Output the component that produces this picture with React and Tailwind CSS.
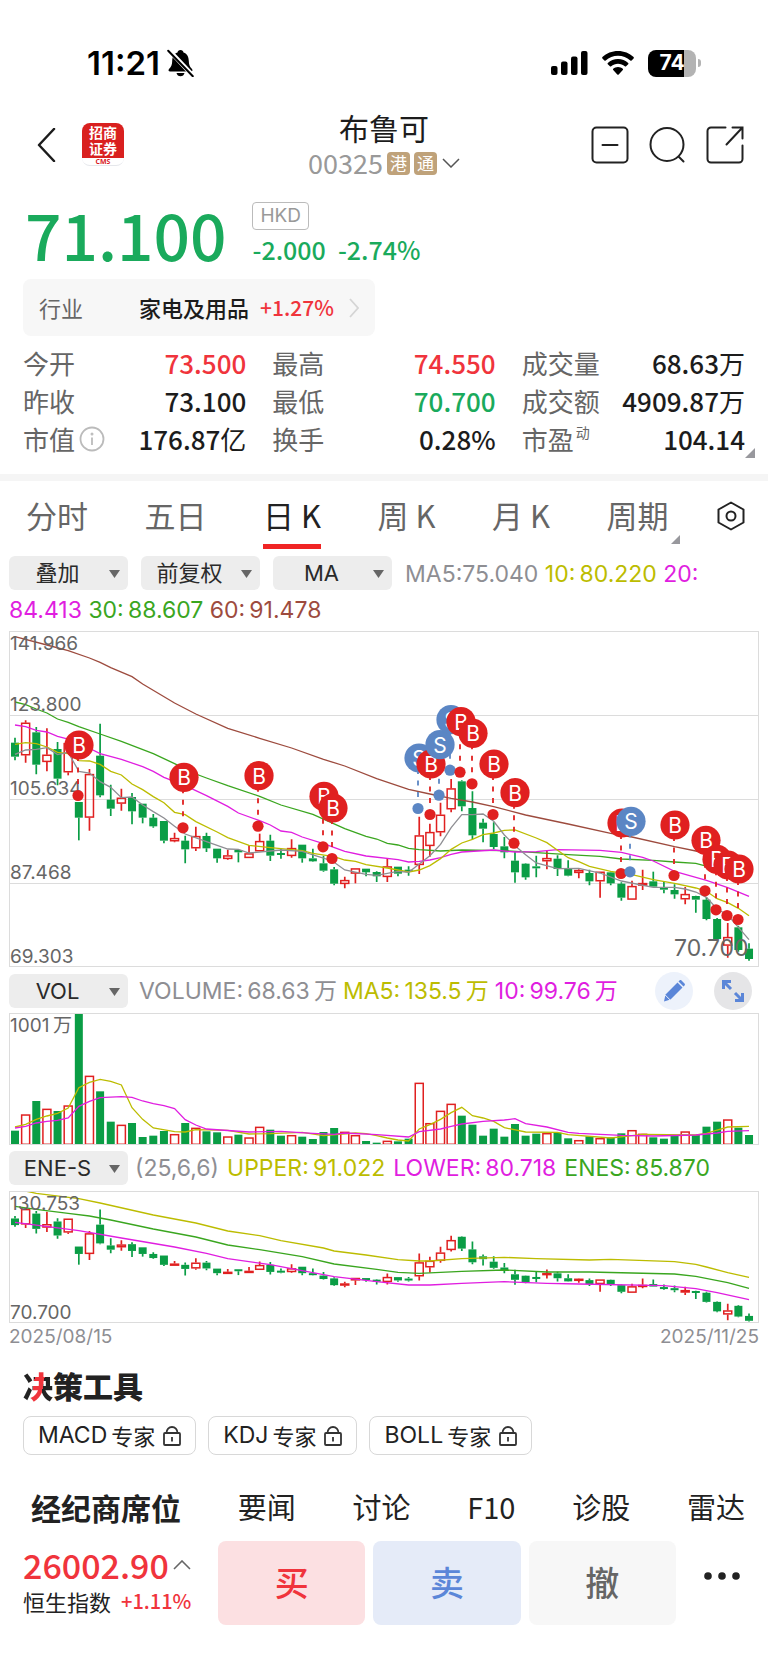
import { useState } from "react";

const RED = "#e02020";
const GREEN = "#0a9d45";
const BLUE = "#5b86c4";

// high, body top, body bottom, low, 1 = up day. Levels are thirds of a pixel.
const candles = [
  [336, 351, 393, 404, 0], [284, 291, 389, 411, 1], [304, 320, 417, 446, 0], [308, 387, 409, 437, 1],
  [349, 370, 459, 479, 0], [352, 352, 440, 449, 1], [529, 529, 576, 644, 0], [430, 445, 576, 615, 1],
  [294, 390, 509, 515, 0], [477, 522, 549, 571, 0], [489, 516, 534, 555, 1], [502, 514, 557, 596, 0],
  [534, 534, 576, 593, 0], [565, 576, 602, 606, 0], [586, 586, 645, 653, 0], [621, 637, 647, 650, 1],
  [630, 645, 671, 713, 0], [603, 631, 668, 676, 1], [621, 631, 668, 679, 0], [669, 669, 698, 711, 0],
  [672, 689, 700, 702, 1], [673, 673, 680, 710, 0], [659, 683, 697, 697, 1], [624, 646, 677, 677, 1],
  [627, 645, 690, 706, 0], [669, 682, 688, 699, 0], [641, 667, 691, 696, 1], [657, 657, 698, 711, 0],
  [669, 698, 707, 708, 0], [690, 713, 735, 738, 0], [724, 731, 774, 779, 0], [753, 763, 775, 788, 1],
  [728, 728, 744, 773, 1], [729, 729, 740, 752, 0], [737, 739, 752, 769, 0], [700, 722, 754, 769, 1],
  [723, 723, 744, 752, 0], [722, 732, 738, 750, 0], [573, 629, 718, 745, 1], [594, 619, 661, 693, 1],
  [531, 567, 620, 632, 1], [460, 488, 551, 560, 1], [464, 467, 542, 557, 0], [497, 547, 629, 641, 0],
  [579, 591, 609, 650, 0], [590, 625, 664, 670, 0], [634, 662, 680, 698, 0], [676, 705, 740, 771, 0],
  [713, 714, 755, 762, 0], [690, 722, 728, 755, 0], [675, 697, 707, 731, 1], [689, 699, 730, 751, 0],
  [704, 730, 750, 752, 0], [731, 733, 742, 758, 1], [732, 742, 767, 779, 0], [738, 738, 767, 816, 1],
  [738, 740, 773, 779, 0], [770, 774, 816, 825, 0], [765, 781, 822, 822, 1], [732, 772, 780, 793, 1],
  [738, 767, 783, 783, 0], [769, 786, 790, 803, 0], [776, 793, 806, 819, 0], [784, 805, 821, 836, 1],
  [810, 811, 822, 861, 0], [815, 822, 880, 884, 0], [877, 880, 940, 945, 0], [892, 934, 960, 996, 1],
  [900, 905, 973, 978, 0], [953, 969, 1000, 1005, 0],
];

const volumes = [
  495, 446, 406, 429, 436, 419, 142, 330, 377, 468, 477, 472, 514, 510, 496, 505, 472, 486, 497, 500, 512, 507, 515,
  483, 492, 510, 508, 513, 520, 499, 487, 498, 508, 526, 531, 525, 527, 519, 351, 472, 435, 414, 450, 477, 510, 489,
  513, 475, 510, 504, 502, 501, 518, 523, 512, 517, 515, 503, 493, 504, 515, 519, 511, 497, 508, 483, 468, 461, 486,
  508,
];

// [day, level] pairs
const priceLines = [
  {
    color: "#9d4b3e",
    points: [[0, 33], [3, 58], [5, 75], [7, 97], [8, 110], [9, 126], [11, 153], [12, 175], [15, 232], [17, 265], [20, 308], [23, 338], [26, 367], [29, 401], [31, 421], [34, 459], [37, 491], [39, 505], [41, 518], [43, 529], [45, 543], [48, 568], [52, 595], [56, 623], [58, 634], [62, 663], [64, 676], [69, 716]],
  },
  {
    color: "#3aa61f",
    points: [[0, 229], [1, 237], [2, 250], [3, 262], [4, 280], [5, 290], [6, 303], [8, 325], [10, 347], [13, 384], [15, 414], [17, 445], [18, 457], [20, 480], [23, 512], [25, 538], [28, 566], [31, 609], [33, 632], [34, 640], [35, 653], [36, 658], [37, 668], [38, 672], [40, 676], [42, 673], [46, 675], [49, 681], [52, 687], [55, 692], [57, 700], [60, 704], [62, 709], [64, 713], [69, 756]],
  },
  {
    color: "#e01ee0",
    points: [[0, 298], [1, 303], [2, 314], [3, 319], [4, 332], [5, 340], [6, 352], [8, 384], [10, 401], [12, 423], [13, 437], [14, 455], [16, 480], [18, 510], [20, 542], [21, 562], [23, 585], [24, 598], [25, 616], [26, 620], [27, 634], [29, 654], [31, 677], [33, 691], [36, 702], [37, 709], [38, 707], [39, 703], [40, 696], [41, 686], [42, 679], [45, 673], [47, 679], [49, 678], [51, 672], [55, 674], [57, 680], [59, 695], [60, 706], [62, 737], [65, 764], [67, 786], [69, 812]],
  },
  {
    color: "#bcbc00",
    points: [[0, 356], [1, 351], [2, 354], [3, 364], [4, 380], [5, 384], [6, 405], [7, 406], [8, 416], [9, 437], [10, 448], [11, 475], [12, 492], [13, 513], [14, 531], [15, 560], [16, 567], [17, 588], [19, 619], [20, 636], [22, 659], [24, 666], [27, 675], [28, 683], [30, 693], [31, 703], [32, 707], [33, 717], [35, 727], [37, 739], [38, 733], [39, 720], [40, 699], [41, 671], [42, 652], [43, 641], [44, 627], [45, 622], [46, 614], [47, 613], [49, 637], [50, 651], [51, 674], [52, 696], [53, 708], [54, 722], [56, 737], [58, 747], [60, 762], [62, 773], [64, 787], [65, 797], [66, 819], [67, 831], [68, 848], [69, 870]],
  },
  {
    color: "#8e8e93",
    points: [[0, 386], [1, 373], [2, 371], [3, 366], [4, 387], [5, 380], [6, 437], [7, 442], [8, 468], [9, 485], [10, 516], [11, 514], [12, 538], [13, 558], [14, 577], [15, 602], [16, 625], [18, 648], [20, 670], [21, 671], [22, 682], [24, 676], [25, 673], [27, 677], [28, 688], [29, 697], [30, 710], [31, 733], [33, 746], [34, 749], [36, 737], [37, 740], [38, 715], [39, 690], [40, 656], [41, 606], [42, 567], [43, 567], [44, 565], [45, 587], [46, 628], [47, 660], [48, 687], [49, 712], [51, 729], [53, 728], [55, 742], [57, 766], [60, 785], [62, 785], [63, 790], [64, 799], [65, 815], [66, 850], [67, 868], [68, 905], [69, 942]],
  },
];

const volumeLines = [
  {
    color: "#bcbc00",
    points: [[0, 484], [1, 476], [2, 461], [3, 451], [4, 443], [5, 427], [6, 366], [7, 350], [8, 341], [9, 347], [10, 358], [11, 426], [12, 461], [13, 487], [15, 498], [16, 499], [17, 492], [20, 494], [22, 505], [24, 504], [27, 500], [29, 510], [32, 502], [33, 504], [34, 510], [35, 517], [36, 523], [37, 526], [38, 490], [39, 477], [40, 461], [41, 441], [42, 425], [43, 450], [44, 457], [45, 467], [46, 486], [48, 499], [51, 500], [52, 507], [56, 517], [58, 510], [59, 506], [64, 508], [65, 503], [66, 493], [67, 484], [69, 482]],
  },
  {
    color: "#e01ee0",
    points: [[0, 487], [1, 482], [2, 472], [3, 467], [4, 464], [5, 457], [6, 422], [7, 407], [8, 396], [10, 393], [11, 395], [12, 406], [13, 414], [14, 420], [15, 429], [16, 462], [17, 478], [18, 490], [22, 499], [25, 497], [28, 503], [30, 506], [31, 502], [34, 507], [37, 514], [38, 498], [40, 490], [41, 482], [42, 475], [44, 467], [46, 463], [47, 459], [48, 474], [50, 484], [52, 500], [53, 503], [57, 509], [60, 511], [64, 508], [66, 502], [67, 497], [69, 495]],
  },
];

const eneLines = [
  {
    color: "#bcbc00",
    points: [[0, 136], [1, 136], [2, 143], [6, 159], [8, 172], [13, 208], [17, 232], [20, 256], [23, 270], [25, 285], [29, 307], [30, 316], [33, 328], [36, 342], [38, 346], [39, 346], [42, 339], [46, 335], [49, 339], [54, 343], [56, 341], [62, 348], [64, 356], [65, 364], [67, 381], [69, 395]],
  },
  {
    color: "#3aa61f",
    points: [[0, 182], [2, 191], [5, 203], [7, 211], [9, 223], [13, 250], [17, 274], [20, 298], [23, 312], [27, 333], [30, 355], [34, 371], [36, 380], [38, 383], [42, 377], [46, 373], [50, 379], [54, 379], [62, 385], [64, 392], [67, 411], [69, 428]],
  },
  {
    color: "#e01ee0",
    points: [[0, 230], [6, 255], [10, 277], [15, 304], [18, 323], [20, 339], [24, 357], [30, 393], [34, 408], [37, 418], [39, 418], [42, 413], [46, 408], [50, 413], [53, 415], [61, 420], [64, 429], [66, 441], [69, 462]],
  },
];

const trades = [
  ["B", 70, 358], ["B", 175, 455], ["B", 250, 450], ["B", 315, 512], ["B", 324, 547], ["S", 410, 397],
  ["B", 422, 415], ["S", 431, 357], ["S", 442, 282], ["B", 452, 288], ["B", 464, 323], ["B", 485, 415],
  ["B", 506, 501], ["B", 613, 592], ["S", 622, 587], ["B", 666, 598], ["B", 697, 644], ["B", 708, 701],
  ["B", 719, 718], ["B", 730, 730],
];

const dayX = (i) => 6 + i * 10.638;
const priceY = (v) => (v - 16) / 3;
const volumeY = (v) => (v - 142) / 3;
const eneY = (v) => (v - 136) / 3;
const priceToEne = (v) => eneY(v * 0.473 + 52.4);

const Lines = ({ lines, y }) =>
  lines.map((line, n) => (
    <polyline
      key={n}
      points={line.points.map(([i, v]) => `${dayX(i)},${y(v)}`).join(" ")}
      fill="none"
      stroke={line.color}
      strokeWidth="1.3"
    />
  ));

const Candles = ({ y }) =>
  candles.map(([high, top, bottom, low, up], i) => {
    const x = dayX(i);
    const color = up ? RED : GREEN;
    const h = Math.max(y(bottom) - y(top), 2);
    return (
      <g key={i} stroke={color}>
        <path d={`M${x} ${y(high)}V${y(top)}M${x} ${y(top) + h}V${y(low)}`} strokeWidth="1.7" />
        {up ? (
          <rect x={x - 4} y={y(top) + 0.6} width="8" height={Math.max(h - 1.2, 1)} fill="none" strokeWidth="1.5" />
        ) : (
          <rect x={x - 4} y={y(top)} width="8" height={h} fill={color} stroke="none" />
        )}
      </g>
    );
  });

const Chart = ({ height, label, children }) => (
  <svg
    viewBox={`0 0 750 ${height}`}
    className="block h-auto w-full font-[Inter,'Noto_Sans_CJK_SC',sans-serif]"
    role="img"
    aria-label={label}
  >
    {children}
    <rect x="0.5" y="0.5" width="749" height={height - 1} fill="none" stroke="#dcdcdc" />
  </svg>
);

const PriceChart = () => (
  <Chart height={336} label="日K">
    {[84, 168, 252].map((y) => (
      <path key={y} d={`M0 ${y + 0.5}H750`} stroke="#dcdcdc" />
    ))}
    <Candles y={priceY} />
    <Lines lines={priceLines} y={priceY} />
    <g fill="#666" fontSize="19">
      <text x="1" y="19">141.966</text>
      <text x="1" y="80">123.800</text>
      <text x="1" y="164">105.634</text>
      <text x="1" y="248">87.468</text>
      <text x="1" y="332">69.303</text>
      <text x="665" y="325" fontSize="23">70.700</text>
    </g>
    {trades.map(([side, x, v], i) => {
      const y = priceY(v);
      const color = side === "B" ? RED : BLUE;
      return (
        <g key={i}>
          <path d={`M${x - 1} ${y + 11}V${y + 45}`} stroke={color} strokeWidth="1.8" strokeDasharray="5 6.5" />
          <circle cx={x - 1} cy={y + 50.5} r="5.6" fill={color} />
        </g>
      );
    })}
    {trades.map(([side, x, v], i) => (
      <g key={i}>
        <circle cx={x} cy={priceY(v)} r="14.6" fill={side === "B" ? RED : BLUE} />
        <text x={x} y={priceY(v) + 8} fontSize="21" fill="#fff" textAnchor="middle">
          {side}
        </text>
      </g>
    ))}
  </Chart>
);

const VolumeChart = () => (
  <Chart height={132} label="VOL">
    {volumes.map((v, i) => {
      const x = dayX(i);
      const y = volumeY(v);
      return candles[i][4] ? (
        <rect key={i} x={x - 4} y={y + 0.7} width="8" height={130.6 - y} fill="none" stroke={RED} strokeWidth="1.5" />
      ) : (
        <rect key={i} x={x - 4} y={y} width="8" height={132 - y} fill={GREEN} />
      );
    })}
    <Lines lines={volumeLines} y={volumeY} />
    <text x="1" y="19" fontSize="19" fill="#666">1001{"\u2009"}万</text>
  </Chart>
);

const EneChart = () => (
  <Chart height={132} label="ENE-S">
    <Candles y={priceToEne} />
    <Lines lines={eneLines} y={eneY} />
    <g fill="#666" fontSize="19">
      <text x="1" y="19">130.753</text>
      <text x="1" y="128">70.700</text>
    </g>
  </Chart>
);

const Picker = ({ label, options }) => (
  <span className="relative mr-[13px] inline-block h-[34px] w-[119px] align-top">
    <select
      aria-label={label}
      className="block h-full w-full appearance-none rounded-md bg-[#ededed] pr-[22px] text-center text-[22px] leading-[34px] text-[#2a2a2a] [text-align-last:center]"
    >
      {options.map((o) => (
        <option key={o}>{o}</option>
      ))}
    </select>
    <svg viewBox="0 0 11 8" className="pointer-events-none absolute top-[14px] right-2 h-2 w-[11px]" fill="#666">
      <path d="M0 0h11L5.500 8z" />
    </svg>
  </span>
);

// name:value pair, with an optional unit set a thin space apart
const Reading = ({ name, value, unit, color }) => (
  <span className={`whitespace-nowrap ${color}`}>
    {name}:{"\u2009"}
    {value}
    {unit && `\u2009${unit}`}
  </span>
);

const Corner = ({ className }) => (
  <svg viewBox="0 0 10 10" className={className} fill="#98989d">
    <path d="M10 0v10H0z" />
  </svg>
);

const StatusBar = () => (
  <div className="flex h-8 items-center justify-between pr-[67px] pl-[87px] font-[Inter,sans-serif]">
    <div className="flex items-center gap-[7px]">
      <span className="text-[33px] leading-8 font-semibold text-black">11:21</span>
      <svg viewBox="0 0 27 28" className="h-7 w-[27px]">
        <path
          d="M13.500 1c-1.800 0-2.800 1-3 2.400C6.600 4.700 5.300 8 5.200 12c-.1 4-.9 5.600-3 7.700-1.200 1.300-.8 2.800 1 2.800h20.600c1.800 0 2.200-1.500 1-2.800-2.100-2.100-2.900-3.700-3-7.700-.1-4-1.400-7.300-5.300-8.600C16.300 2 15.300 1 13.500 1zM9.500 24h8c-.4 2-2 3.300-4 3.300s-3.600-1.300-4-3.300z"
        />
        <path d="M2.200 1.500l23.600 25" stroke="#fff" strokeWidth="4.500" />
        <path d="M1.200 1.800l24.600 25.400" stroke="#000" strokeWidth="2" strokeLinecap="round" />
      </svg>
    </div>
    <div className="flex items-center gap-[14px]">
      <svg viewBox="0 0 37 24" className="h-6 w-[37px]">
        <rect x="0" y="15" width="6.500" height="9" rx="2" />
        <rect x="10" y="10.500" width="6.500" height="13.500" rx="2" />
        <rect x="20" y="5.500" width="6.500" height="18.500" rx="2" />
        <rect x="30" y="0" width="6.500" height="24" rx="2" />
      </svg>
      <svg viewBox="0 0 32 24" className="h-6 w-8">
        <path d="M16 0C9.900 0 4.500 2.300.4 6.100c-.4.400-.4.900 0 1.300l2 2c.4.400.9.400 1.300 0C7 6.500 11.300 4.800 16 4.800s9 1.700 12.300 4.600c.4.400.9.400 1.300 0l2-2c.4-.4.400-.9 0-1.300C27.500 2.300 22.100 0 16 0z" />
        <path d="M16 8c-3.900 0-7.500 1.500-10.200 4-.4.400-.4.900 0 1.300l2.100 2c.4.400.9.400 1.300 0 1.800-1.600 4.200-2.600 6.800-2.600s5 1 6.800 2.600c.4.400.9.400 1.300 0l2.100-2c.4-.4.400-.9 0-1.300C23.500 9.500 19.900 8 16 8z" />
        <path d="M16 16c-1.900 0-3.500.7-4.800 1.800-.4.400-.4.900 0 1.300l4.100 4.300c.4.400 1 .4 1.400 0l4.100-4.300c.4-.4.400-.9 0-1.300C19.500 16.700 17.900 16 16 16z" />
      </svg>
      <div className="flex items-center gap-[2px]">
        <span className="flex h-[27px] w-[48px] items-center justify-center rounded-lg bg-[linear-gradient(90deg,#000_74%,#b3b3b3_74%)] text-[21px] font-bold text-white">
          74
        </span>
        <span className="h-2 w-[3px] rounded-r-full bg-[#b3b3b3]" />
      </div>
    </div>
  </div>
);

const Header = () => (
  <header className="mt-[30px] grid h-[72px] grid-cols-[1fr_auto_1fr] items-center px-6">
    <div className="flex items-center gap-[26px] pl-3">
      <button aria-label="返回">
        <svg viewBox="0 0 20 34" className="h-[34px] w-5" fill="none" stroke="#1c1c1c" strokeWidth="2.500">
          <path d="M18 1L3 17l15 16" strokeLinecap="round" strokeLinejoin="round" />
        </svg>
      </button>
      <div className="mb-[2px] flex h-[43px] w-[42px] flex-col overflow-hidden rounded-lg border-b border-gray-200 bg-white">
        <div className="flex h-[35px] flex-col items-center justify-center bg-[#d9201f] text-[14px] leading-4 font-bold text-white">
          <span>招商</span>
          <span>证券</span>
        </div>
        <span className="text-center font-['Open_Sans',sans-serif] text-[7px] leading-[7px] font-bold text-[#d9201f]">CMS</span>
      </div>
    </div>
    <div className="flex flex-col items-center">
      <h1 className="text-[30px] leading-9">布鲁可</h1>
      <div className="flex h-9 items-center gap-1 text-[27px] leading-9 text-[#999]">
        <span>00325</span>
        <span className="flex h-[23px] w-[23px] items-center justify-center rounded-[4px] bg-[#bfa27a] text-[17px] text-white">港</span>
        <span className="flex h-[23px] w-[23px] items-center justify-center rounded-[4px] bg-[#bfa27a] text-[17px] text-white">通</span>
        <svg viewBox="0 0 18 10" className="ml-[1px] h-[10px] w-[18px]" fill="none" stroke="#555" strokeWidth="1.500">
          <path d="M1 1l8 8 8-8" />
        </svg>
      </div>
    </div>
    <div className="flex items-center justify-end gap-[20px]">
      <button aria-label="移除自选">
        <svg viewBox="0 0 38 38" className="h-[38px] w-[38px]" fill="none" stroke="#222" strokeWidth="2">
          <rect x="1.500" y="1.500" width="35" height="35" rx="4" />
          <path d="M11.500 19h15" strokeLinecap="round" />
        </svg>
      </button>
      <button aria-label="搜索">
        <svg viewBox="0 0 37 38" className="h-[38px] w-[37px]" fill="none" stroke="#222" strokeWidth="2">
          <circle cx="18" cy="18.500" r="16.500" />
          <path d="M30 31l4.500 4.500" strokeLinecap="round" />
        </svg>
      </button>
      <button aria-label="分享">
        <svg viewBox="0 0 38 38" className="h-[38px] w-[38px]" fill="none" stroke="#222" strokeWidth="2">
          <path d="M19.500 1.500H5a3.500 3.500 0 00-3.500 3.500v28A3.500 3.500 0 005 36.500h28a3.500 3.500 0 003.500-3.500V19.500M26.500 1.500h10v11M36 2L20.500 18.500" strokeLinecap="round" />
        </svg>
      </button>
    </div>
  </header>
);

const stats = [
  { label: "今开", value: "73.500", color: "text-[#f0343c]" },
  { label: "最高", value: "74.550", color: "text-[#f0343c]" },
  { label: "成交量", value: "68.63", unit: "万" },
  { label: "昨收", value: "73.100" },
  { label: "最低", value: "70.700", color: "text-[#1aaa5c]" },
  { label: "成交额", value: "4909.87", unit: "万" },
  { label: "市值", value: "176.87", unit: "亿", info: true },
  { label: "换手", value: "0.28%" },
  { label: "市盈", value: "104.14", sup: "动" },
];

const Quote = () => (
  <section className="px-[23px]">
    <div className="mt-3 flex h-20 items-center gap-[26px]">
      <span className="pl-[2px] text-[64px] leading-20 font-medium text-[#1aaa5c]">71.100</span>
      <div className="flex flex-col items-start gap-1">
        <span className="flex h-7 items-center rounded-[4px] border border-[#bbb] px-[7px] font-[Inter,sans-serif] text-[19px] text-[#999]">
          HKD
        </span>
        <span className="flex gap-3 text-[25px] leading-[30px] font-medium text-[#1aaa5c]">
          <span>-2.000</span>
          <span>-2.74%</span>
        </span>
      </div>
    </div>
    <a href="#industry" className="mt-[6px] flex h-[57px] w-[352px] items-center rounded-lg bg-[#f7f7f7] px-4 text-[22px]">
      <span className="w-[100px] text-[#666]">行业</span>
      <span className="font-medium text-[#1c1c1c]">家电及用品</span>
      <span className="ml-[11px] text-[21px] font-medium text-[#f0343c]">+1.27%</span>
      <svg viewBox="0 0 10 20" className="ml-auto h-5 w-[10px]" fill="none" stroke="#d5d5d5" strokeWidth="1.800">
        <path d="M1 1l8 9-8 9" />
      </svg>
    </a>
    <dl className="relative mt-2 mb-4 grid grid-cols-3 gap-x-[26px] text-[26px] leading-[38px]">
      {stats.map((s) => (
        <div key={s.label} className="flex h-[38px] justify-between whitespace-nowrap">
          <dt className="flex items-center gap-1 text-[#666]">
            {s.label}
            {s.info && (
              <svg viewBox="0 0 26 26" className="h-[26px] w-[26px]" fill="none" stroke="#bbb" strokeWidth="1.800">
                <circle cx="13" cy="13" r="11.500" />
                <path d="M13 11.500V19" />
                <circle cx="13" cy="8" r="0.600" />
              </svg>
            )}
            {s.sup && <sup className="-ml-[2px] text-[14px] leading-4">{s.sup}</sup>}
          </dt>
          <dd className={`font-medium ${s.color || "text-[#1c1c1c]"}`}>
            {s.value}
            {s.unit && <span className="font-normal">{s.unit}</span>}
          </dd>
        </div>
      ))}
      <Corner className="absolute -right-[10px] bottom-0 h-[10px] w-[10px]" />
    </dl>
  </section>
);

const periods = ["分时", "五日", "日 K", "周 K", "月 K", "周期"];

const PeriodTabs = () => {
  const [active, setActive] = useState("日 K");
  return (
    <nav className="box-content flex h-[75px] items-start justify-between border-t-[7px] border-[#f5f5f5] pr-[23px] pl-[26px]">
      {periods.map((p) => (
        <button
          key={p}
          onClick={() => setActive(p)}
          className={`relative h-[68px] border-b-[5px] pt-[6px] text-[31px] ${p === active ? "border-[#f02424] text-[#222]" : "border-transparent text-[#666]"}`}
        >
          {p}
          {p === "周期" && <Corner className="absolute -right-[12px] bottom-0 h-[9px] w-[9px]" />}
        </button>
      ))}
      <button aria-label="图表设置" className="-ml-2 h-[70px]">
        <svg viewBox="0 0 28 30" className="h-[30px] w-7" fill="none" stroke="#222" strokeWidth="2">
          <path d="M14 1.500l12.500 7v13L14 28.500l-12.500-7v-13z" strokeLinejoin="round" />
          <circle cx="14" cy="15" r="4.500" />
        </svg>
      </button>
    </nav>
  );
};

const Charts = () => (
  <section className="px-[9px] font-[Inter,'Noto_Sans_CJK_SC',sans-serif] text-[23px] leading-9">
    <div className="mb-[3px]">
      <Picker label="叠加" options={["叠加"]} />
      <Picker label="复权" options={["前复权", "后复权", "不复权"]} />
      <Picker label="主图指标" options={["MA", "BOLL"]} />
      <span className="text-[#8e8e93]">MA5:75.040</span>{" "}
      <Reading name="10" value="80.220" color="text-[#bcbc00]" />{" "}
      <span className="text-[#e01ee0]">20: 84.413</span>{" "}
      <Reading name="30" value="88.607" color="text-[#3aa61f]" />{" "}
      <Reading name="60" value="91.478" color="text-[#9d4b3e]" />
    </div>
    <PriceChart />
    <div className="mt-[6px] mb-1 flex h-9 items-center">
      <Picker label="副图指标一" options={["VOL", "MACD"]} />
      <div className="-ml-[2px] flex gap-[6px] whitespace-nowrap">
        <Reading name="VOLUME" value="68.63" unit="万" color="text-[#8e8e93]" />
        <Reading name="MA5" value="135.5" unit="万" color="text-[#bcbc00]" />
        <Reading name="10" value="99.76" unit="万" color="text-[#e01ee0]" />
      </div>
      <div className="mr-[7px] ml-auto flex gap-[21px]">
        <button aria-label="画线" className="flex h-[38px] w-[38px] items-center justify-center rounded-full bg-[#edf2fb]">
          <svg viewBox="0 0 22 22" className="h-[22px] w-[22px]" fill="#5b86d8">
            <path d="M2.500 14.500L14.500 2.500l5 5L7.500 19.500 1 21.500zM15.500 1.500l1-1c.6-.6 1.400-.6 2 0l3 3c.6.600.6 1.400 0 2l-1 1z" />
            <path d="M2.200 15l5 5" stroke="#edf2fb" strokeWidth="1" />
          </svg>
        </button>
        <button aria-label="全屏" className="flex h-[38px] w-[38px] items-center justify-center rounded-full bg-[#e5e5e7]">
          <svg viewBox="0 0 22 22" className="h-[22px] w-[22px]" fill="none" stroke="#5b86d8" strokeWidth="3">
            <path d="M1.500 9V1.500H9M1.500 1.500l7.500 7.500M20.500 13v7.500H13M20.500 20.500L13 13" />
          </svg>
        </button>
      </div>
    </div>
    <VolumeChart />
    <div className="mt-[5px] mb-[5px] flex h-9 items-center">
      <Picker label="副图指标二" options={["ENE-S", "KDJ"]} />
      <div className="-ml-[6px] flex gap-2 whitespace-nowrap">
        <span className="text-[#8e8e93]">(25,6,6)</span>
        <Reading name="UPPER" value="91.022" color="text-[#bcbc00]" />
        <Reading name="LOWER" value="80.718" color="text-[#e01ee0]" />
        <Reading name="ENES" value="85.870" color="text-[#3aa61f]" />
      </div>
    </div>
    <EneChart />
    <div className="flex justify-between text-[19px] leading-7 text-[#8e8e93]">
      <span>2025/08/15</span>
      <span>2025/11/25</span>
    </div>
  </section>
);

const tools = ["MACD", "KDJ", "BOLL"];

const Tools = () => (
  <section className="mt-[14px] px-[23px]">
    <h2 className="text-[30px] leading-10 font-black text-[#222]">
      <span className="bg-[linear-gradient(100deg,#222_38%,#f0343c_38%,#f0343c_64%,#222_64%)] bg-clip-text text-transparent">决</span>
      策工具
    </h2>
    <div className="mt-[11px] flex gap-3">
      {tools.map((t) => (
        <button
          key={t}
          className="flex h-[39px] items-center gap-1 rounded-lg border border-[#d8d8d8] px-[14px] text-[22px] text-[#222]"
        >
          <span className="font-[Inter,sans-serif] text-[23px]">{t}</span>
          <span>专家</span>
          <svg viewBox="0 0 18 20" className="ml-1 h-5 w-[18px]" fill="none" stroke="#333" strokeWidth="1.800">
            <rect x="1" y="7" width="16" height="12" rx="1" />
            <path d="M3.500 7C3.500 3.500 6 1 9 1s5.500 2.500 5.500 6M9 11v4.500" />
          </svg>
        </button>
      ))}
    </div>
  </section>
);

const NewsTabs = () => (
  <nav className="mt-7 flex h-12 items-center justify-between pr-[23px] pl-[31px] text-[29px] text-[#222]">
    <a href="#brokers" className="text-[30px] font-bold">经纪商席位</a>
    <a href="#news">要闻</a>
    <a href="#talk">讨论</a>
    <a href="#f10">F10</a>
    <a href="#diagnosis">诊股</a>
    <a href="#radar">雷达</a>
  </nav>
);

const TradeBar = () => (
  <footer className="mt-[10px] mb-11 flex h-[84px] gap-2 pr-7 pl-[23px]">
    <div className="flex w-[187px] shrink-0 flex-col justify-center pb-1 text-[#f0343c]">
      <div className="flex items-center gap-1">
        <span className="text-[34px] leading-10 font-medium">26002.90</span>
        <svg viewBox="0 0 18 10" className="h-[10px] w-[18px]" fill="none" stroke="#666" strokeWidth="1.600">
          <path d="M1 9l8-8 8 8" />
        </svg>
      </div>
      <div className="flex gap-[10px] text-[22px] leading-8">
        <span className="text-[#222]">恒生指数</span>
        <span className="text-[20px] font-medium">+1.11%</span>
      </div>
    </div>
    <button className="flex-1 rounded-lg bg-[#fce0e2] pb-1 text-[34px] font-medium text-[#f0343c]">买</button>
    <button className="flex-1 rounded-lg bg-[#e5ebf8] pb-1 text-[34px] font-medium text-[#5b86d8]">卖</button>
    <button className="flex-1 rounded-lg bg-[#f7f7f7] pb-1 text-[34px] font-medium text-[#666]">撤</button>
    <button aria-label="更多" className="ml-5 flex items-center pb-[14px]">
      <svg viewBox="0 0 36 8" className="h-2 w-9" fill="#222">
        <circle cx="4" cy="4" r="3.800" />
        <circle cx="18" cy="4" r="3.800" />
        <circle cx="32" cy="4" r="3.800" />
      </svg>
    </button>
  </footer>
);

const App = () => {
  return (
    <div className="bg-white pt-[47px] font-['Noto_Sans_CJK_SC',sans-serif] text-[#1c1c1c]">
      <StatusBar />
      <Header />
      <Quote />
      <PeriodTabs />
      <Charts />
      <Tools />
      <NewsTabs />
      <TradeBar />
    </div>
  );
};

export default App;
